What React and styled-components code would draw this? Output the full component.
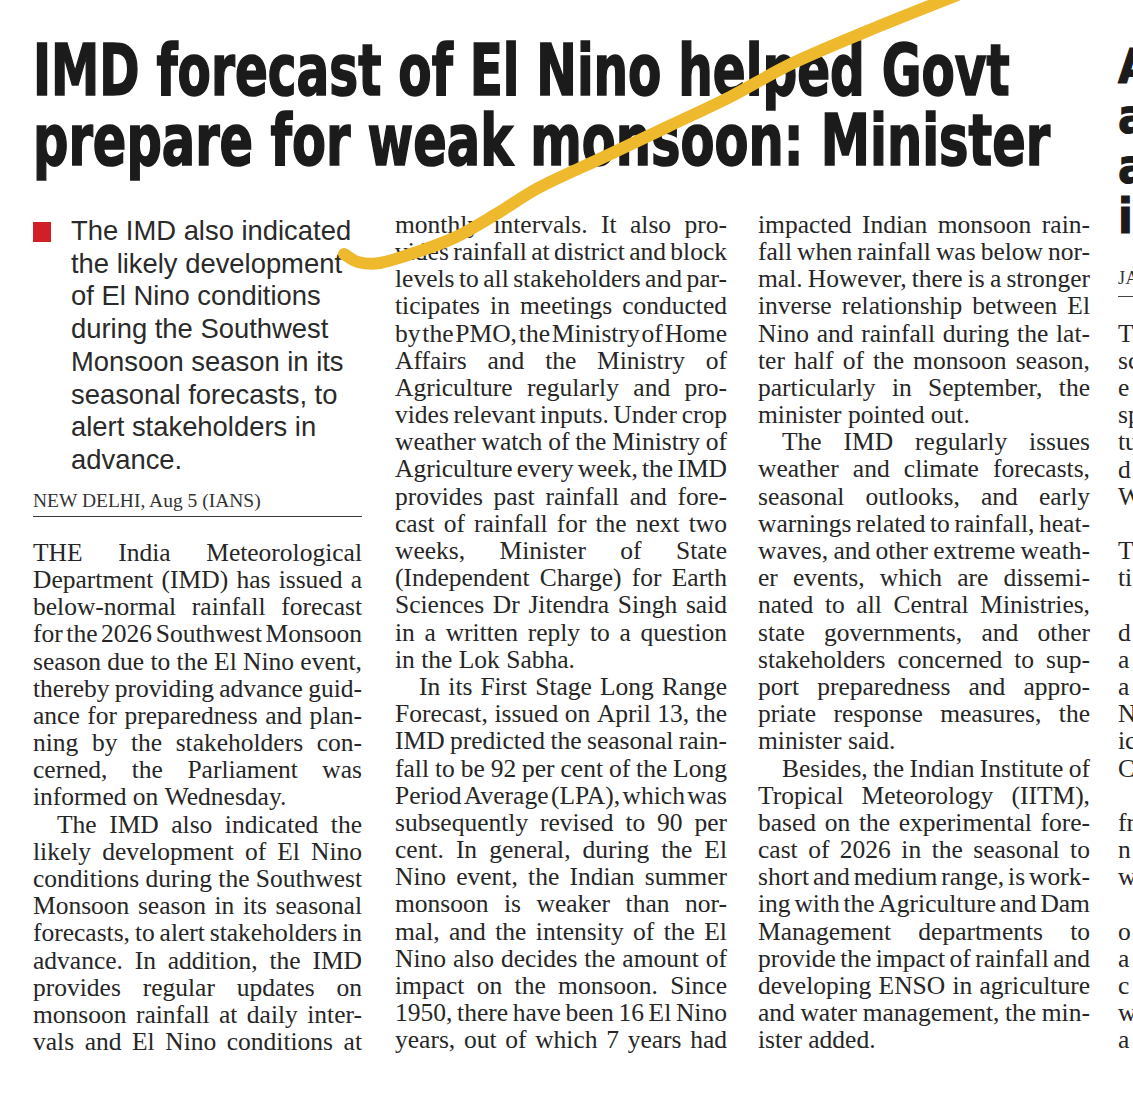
import React, { useLayoutEffect, useRef, useState } from 'react';
import styled, { createGlobalStyle } from 'styled-components';

const GlobalStyle = createGlobalStyle`
  html, body {
    margin: 0;
    padding: 0;
    background: #fff;
  }
  body {
    width: 1133px;
    height: 1093px;
    overflow: hidden;
  }
`;

const Page = styled.div`
  position: relative;
  display: flex;
  width: 1133px;
  height: 1093px;
  overflow: hidden;
  background: #fff;
`;

const Story = styled.article`
  flex: none;
  width: 1057px;
  padding-left: 33px;
`;

const Headline = styled.h1`
  margin: 35.5px 0 0;
  font-family: "DejaVu Sans Condensed", "DejaVu Sans", sans-serif;
  font-weight: 700;
  font-size: 71px;
  line-height: 70px;
  color: #1b1b1b;
  -webkit-text-stroke: 1.6px #1b1b1b;
`;

const HeadRow = styled.span`
  display: block;
  white-space: nowrap;
`;

const HeadText = styled.span`
  display: inline-block;
  transform-origin: 0 50%;
`;

const Columns = styled.div`
  display: flex;
  margin-top: 35.3px;
`;

const Column = styled.div`
  flex: none;
  width: ${p => p.$width}px;
  margin-right: ${p => p.$gap || 0}px;
`;

const PullQuote = styled.div`
  display: flex;
  gap: 20px;
  margin-top: 4.2px;
  font-family: "Liberation Sans", Arial, sans-serif;
  font-size: 27.4px;
  line-height: 32.7px;
  color: #2a2a2a;
`;

const Bullet = styled.span`
  flex: none;
  width: 18px;
  height: 20px;
  margin-top: 7px;
  background: #d11f27;
`;

const QuoteLine = styled.div`
  white-space: nowrap;
`;

const Dateline = styled.div`
  margin-top: 12.8px;
  padding-bottom: 3px;
  border-bottom: 1px solid #3a3a3a;
  font-family: "Liberation Serif", "Times New Roman", serif;
  font-size: 19.5px;
  line-height: 24px;
  color: #333;
`;

const BodyCopy = styled.div`
  margin-top: ${p => p.$top || 0}px;
  font-family: "Liberation Serif", "Times New Roman", serif;
  font-size: 25.5px;
  line-height: 27.2px;
  color: #262626;
`;

const Row = styled.div`
  display: flex;
  justify-content: ${p => (p.$last ? 'flex-start' : 'space-between')};
  column-gap: ${p => (p.$last ? '0.25em' : '1.5px')};
  padding-left: ${p => (p.$indent ? 24 : 0)}px;
  height: 27.2px;
  white-space: nowrap;
`;

const Neighbor = styled.article`
  flex: none;
  width: 300px;
  margin-left: 28px;
`;

const NeighborHead = styled.div`
  margin-top: 40.7px;
  font-family: "DejaVu Sans Condensed", "DejaVu Sans", sans-serif;
  font-weight: 700;
  font-size: 48px;
  line-height: 50px;
  color: #1b1b1b;
  -webkit-text-stroke: 1.2px #1b1b1b;
`;

const NeighborByline = styled.div`
  margin-top: 24.5px;
  padding-bottom: 4px;
  border-bottom: 1px solid #444;
  font-family: "Liberation Serif", "Times New Roman", serif;
  font-size: 18px;
  line-height: 27.2px;
  letter-spacing: 0.5px;
  color: #333;
`;

const Highlight = styled.svg`
  position: absolute;
  left: 0;
  top: 0;
  pointer-events: none;
`;

// highlighter stroke, smoothed through the traced points
const strokePoints = [
  [975, -12], [877, 27], [793, 63], [730, 97], [667, 127], [604, 157],
  [540, 187], [498, 213], [456, 237], [414, 253], [380, 263], [358, 262], [344, 254],
];

const smoothPath = pts => {
  let d = `M${pts[0][0]} ${pts[0][1]}`;
  for (let i = 0; i < pts.length - 1; i++) {
    const p0 = pts[i - 1] || pts[i];
    const p1 = pts[i];
    const p2 = pts[i + 1];
    const p3 = pts[i + 2] || p2;
    const c1 = [p1[0] + (p2[0] - p0[0]) / 6, p1[1] + (p2[1] - p0[1]) / 6];
    const c2 = [p2[0] - (p3[0] - p1[0]) / 6, p2[1] - (p3[1] - p1[1]) / 6];
    d += ` C${c1[0]} ${c1[1]} ${c2[0]} ${c2[1]} ${p2[0]} ${p2[1]}`;
  }
  return d;
};

const quote = [
  'The IMD also indicated',
  'the likely development',
  'of El Nino conditions',
  'during the Southwest',
  'Monsoon season in its',
  'seasonal forecasts, to',
  'alert stakeholders in',
  'advance.',
];

const col1 = [
  {
    indent: false,
    end: true,
    lines: [
      'THE India Meteorological',
      'Department (IMD) has issued a',
      'below-normal rainfall forecast',
      'for the 2026 Southwest Monsoon',
      'season due to the El Nino event,',
      'thereby providing advance guid-',
      'ance for preparedness and plan-',
      'ning by the stakeholders con-',
      'cerned, the Parliament was',
      'informed on Wednesday.',
    ],
  },
  {
    indent: true,
    end: false,
    lines: [
      'The IMD also indicated the',
      'likely development of El Nino',
      'conditions during the Southwest',
      'Monsoon season in its seasonal',
      'forecasts, to alert stakeholders in',
      'advance. In addition, the IMD',
      'provides regular updates on',
      'monsoon rainfall at daily inter-',
      'vals and El Nino conditions at',
    ],
  },
];

const col2 = [
  {
    indent: false,
    end: true,
    lines: [
      'monthly intervals. It also pro-',
      'vides rainfall at district and block',
      'levels to all stakeholders and par-',
      'ticipates in meetings conducted',
      'by the PMO, the Ministry of Home',
      'Affairs and the Ministry of',
      'Agriculture regularly and pro-',
      'vides relevant inputs. Under crop',
      'weather watch of the Ministry of',
      'Agriculture every week, the IMD',
      'provides past rainfall and fore-',
      'cast of rainfall for the next two',
      'weeks, Minister of State',
      '(Independent Charge) for Earth',
      'Sciences Dr Jitendra Singh said',
      'in a written reply to a question',
      'in the Lok Sabha.',
    ],
  },
  {
    indent: true,
    end: false,
    lines: [
      'In its First Stage Long Range',
      'Forecast, issued on April 13, the',
      'IMD predicted the seasonal rain-',
      'fall to be 92 per cent of the Long',
      'Period Average (LPA), which was',
      'subsequently revised to 90 per',
      'cent. In general, during the El',
      'Nino event, the Indian summer',
      'monsoon is weaker than nor-',
      'mal, and the intensity of the El',
      'Nino also decides the amount of',
      'impact on the monsoon. Since',
      '1950, there have been 16 El Nino',
      'years, out of which 7 years had',
    ],
  },
];

const col3 = [
  {
    indent: false,
    end: true,
    lines: [
      'impacted Indian monsoon rain-',
      'fall when rainfall was below nor-',
      'mal. However, there is a stronger',
      'inverse relationship between El',
      'Nino and rainfall during the lat-',
      'ter half of the monsoon season,',
      'particularly in September, the',
      'minister pointed out.',
    ],
  },
  {
    indent: true,
    end: true,
    lines: [
      'The IMD regularly issues',
      'weather and climate forecasts,',
      'seasonal outlooks, and early',
      'warnings related to rainfall, heat-',
      'waves, and other extreme weath-',
      'er events, which are dissemi-',
      'nated to all Central Ministries,',
      'state governments, and other',
      'stakeholders concerned to sup-',
      'port preparedness and appro-',
      'priate response measures, the',
      'minister said.',
    ],
  },
  {
    indent: true,
    end: true,
    lines: [
      'Besides, the Indian Institute of',
      'Tropical Meteorology (IITM),',
      'based on the experimental fore-',
      'cast of 2026 in the seasonal to',
      'short and medium range, is work-',
      'ing with the Agriculture and Dam',
      'Management departments to',
      'provide the impact of rainfall and',
      'developing ENSO in agriculture',
      'and water management, the min-',
      'ister added.',
    ],
  },
];

const neighborHead = ['A', 'a', 'a', 'in'];

const neighborLines = [
  'T', 'sc', 'e', 'sp', 'tu', 'd', 'W', '', 'T', 'ti', '', 'd', 'a', 'a',
  'N', 'ic', 'C', '', 'fr', 'n', 'w', '', 'o', 'a', 'c', 'w', 'a',
];

// fits a headline row to the width it has in print
function HeadLine({ children, width }) {
  const ref = useRef(null);
  const [scale, setScale] = useState(1);
  useLayoutEffect(() => {
    if (ref.current) setScale(width / ref.current.offsetWidth);
  }, [width]);
  return (
    <HeadRow>
      <HeadText ref={ref} style={{ transform: `scaleX(${scale})` }}>
        {children}
      </HeadText>
    </HeadRow>
  );
}

// one justified line of column type; tight lines get their letters squeezed
function BodyLine({ text, indent, last }) {
  const ref = useRef(null);
  const [squeeze, setSqueeze] = useState(0);
  const words = text ? text.split(' ') : ['\u00a0'];

  useLayoutEffect(() => {
    const row = ref.current;
    if (!row || !text) return;
    const cs = getComputedStyle(row);
    const gap = parseFloat(cs.columnGap) || 0;
    const items = Array.from(row.children);
    const used =
      items.reduce((sum, w) => sum + w.getBoundingClientRect().width, 0) +
      gap * (items.length - 1);
    const room = row.clientWidth - parseFloat(cs.paddingLeft);
    const chars = text.replace(/\s/g, '').length;
    if (used > room) setSqueeze((room - used) / chars);
  }, [text]);

  return (
    <Row
      ref={ref}
      $indent={indent}
      $last={last}
      style={squeeze ? { letterSpacing: `${squeeze}px` } : undefined}
    >
      {words.map((w, i) => (
        <span key={i}>{w}</span>
      ))}
    </Row>
  );
}

const ColumnText = ({ paragraphs, top }) => (
  <BodyCopy $top={top}>
    {paragraphs.map((p, pi) =>
      p.lines.map((line, li) => (
        <BodyLine
          key={`${pi}-${li}`}
          text={line}
          indent={p.indent && li === 0}
          last={p.end && li === p.lines.length - 1}
        />
      ))
    )}
  </BodyCopy>
);

export default function App() {
  return (
    <Page>
      <GlobalStyle />
      <Story>
        <Headline>
          <HeadLine width={977}>IMD forecast of El Nino helped Govt</HeadLine>
          <HeadLine width={1017}>prepare for weak monsoon: Minister</HeadLine>
        </Headline>
        <Columns>
          <Column $width={329} $gap={33}>
            <PullQuote>
              <Bullet />
              <div>
                {quote.map(q => (
                  <QuoteLine key={q}>{q}</QuoteLine>
                ))}
              </div>
            </PullQuote>
            <Dateline>NEW DELHI, Aug 5 (IANS)</Dateline>
            <ColumnText paragraphs={col1} top={21.4} />
          </Column>
          <Column $width={332} $gap={31}>
            <ColumnText paragraphs={col2} />
          </Column>
          <Column $width={332}>
            <ColumnText paragraphs={col3} />
          </Column>
        </Columns>
      </Story>
      <Neighbor>
        <NeighborHead>
          {neighborHead.map((h, i) => (
            <div key={i}>{h}</div>
          ))}
        </NeighborHead>
        <NeighborByline>JAIPUR</NeighborByline>
        <BodyCopy $top={22.2}>
          {neighborLines.map((t, i) => (
            <BodyLine key={i} text={t} last />
          ))}
        </BodyCopy>
      </Neighbor>
      <Highlight width="1133" height="300" viewBox="0 0 1133 300">
        <path
          d={smoothPath(strokePoints)}
          fill="none"
          stroke="#eeb92d"
          strokeWidth="12"
          strokeLinecap="round"
          strokeLinejoin="round"
        />
      </Highlight>
    </Page>
  );
}
